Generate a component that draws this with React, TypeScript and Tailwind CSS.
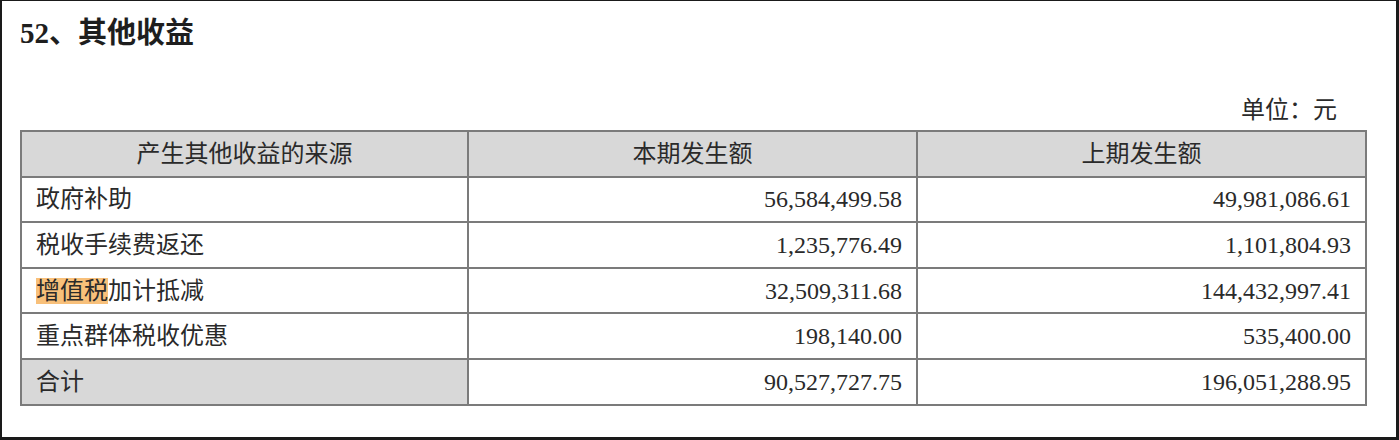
import React from 'react';

const rows = [
  { name: '政府补助', cur: '56,584,499.58', prev: '49,981,086.61' },
  { name: '税收手续费返还', cur: '1,235,776.49', prev: '1,101,804.93' },
  { name: '增值税加计抵减', cur: '32,509,311.68', prev: '144,432,997.41', mark: 3 },
  { name: '重点群体税收优惠', cur: '198,140.00', prev: '535,400.00' },
];

const cell = 'border-2 border-[#7b7b7b] h-[45.6px] px-[14px] text-[24px] leading-none';

const App = () => {
  return (
    <div
      className="w-[1399px] h-[440px] bg-white border-t border-l-2 border-r-[3px] border-b-[3px] border-[#1a1a1a] pl-[18px] pr-[31px] pt-[15px] text-[#2a2a2a]"
      style={{ fontFamily: '"Liberation Serif", "Noto Sans CJK SC", serif' }}
    >
      <h1 className="h-[34px] text-[29px] leading-[34px] font-bold text-[#1e1e1e]">52、其他收益</h1>

      <div className="mt-[46px] h-[28px] pr-[28px] text-right text-[24px] leading-[28px]">单位：元</div>

      <table className="mt-[6px] w-[1345px] border-collapse table-fixed">
        <colgroup>
          <col className="w-[447px]" />
          <col className="w-[449px]" />
          <col className="w-[449px]" />
        </colgroup>
        <thead>
          <tr className="bg-[#d8d8d8]">
            <th className={`${cell} font-normal text-center`}>产生其他收益的来源</th>
            <th className={`${cell} font-normal text-center`}>本期发生额</th>
            <th className={`${cell} font-normal text-center`}>上期发生额</th>
          </tr>
        </thead>
        <tbody>
          {rows.map((r) => (
            <tr key={r.name}>
              <td className={`${cell} text-left`}>
                {r.mark ? (
                  <>
                    <span className="bg-[#f8c07a]">{r.name.slice(0, r.mark)}</span>
                    {r.name.slice(r.mark)}
                  </>
                ) : (
                  r.name
                )}
              </td>
              <td className={`${cell} text-right`}>{r.cur}</td>
              <td className={`${cell} text-right`}>{r.prev}</td>
            </tr>
          ))}
          <tr>
            <td className={`${cell} text-left bg-[#d8d8d8]`}>合计</td>
            <td className={`${cell} text-right`}>90,527,727.75</td>
            <td className={`${cell} text-right`}>196,051,288.95</td>
          </tr>
        </tbody>
      </table>
    </div>
  );
};

export default App;
